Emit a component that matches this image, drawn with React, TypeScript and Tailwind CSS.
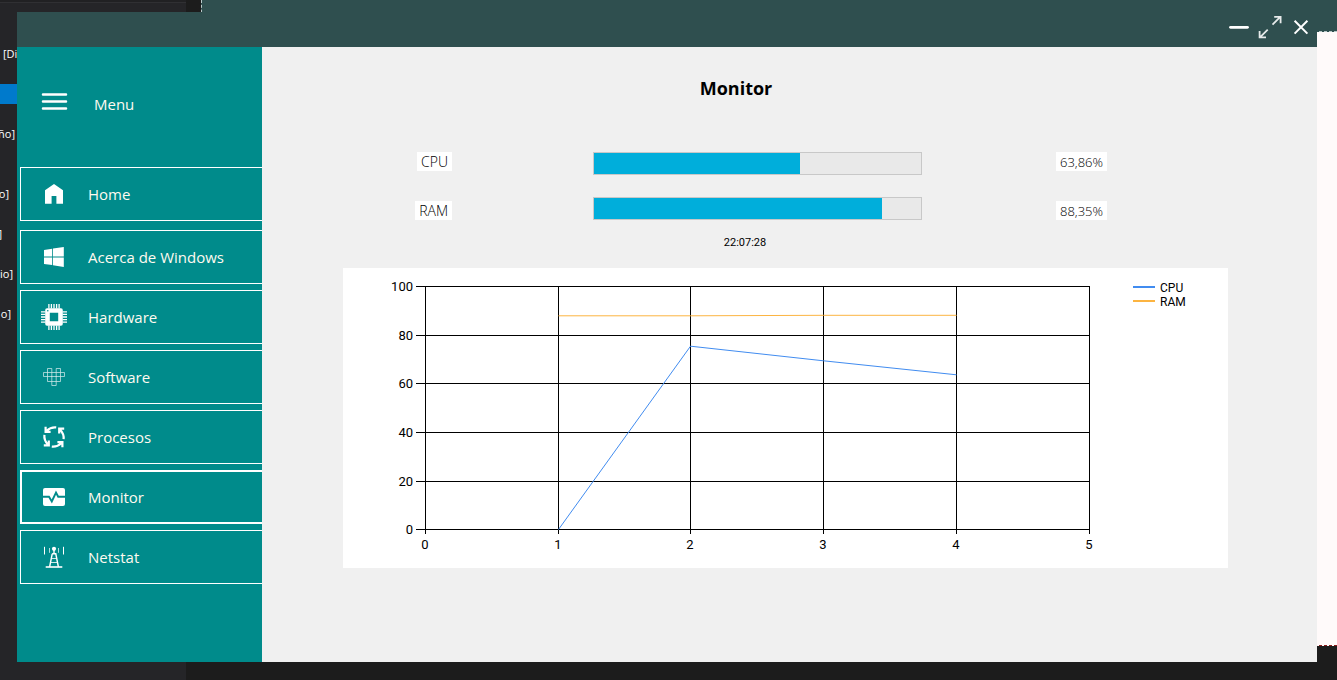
import type { ReactNode } from "react";

type IconProps = { children: ReactNode };

function MenuIcon({ children }: IconProps) {
  return (
    <svg viewBox="0 0 28 28" className="size-7 shrink-0" fill="none" stroke="none" aria-hidden="true">
      {children}
    </svg>
  );
}

const chipPins = [8.9, 11.4, 14, 16.6, 19.1];

const icons: Record<string, ReactNode> = {
  home: <path fill="#fff" d="M14 4 23 10.2V23.8H16.4V16H11.6V23.8H5V10.2Z" />,
  windows: (
    <path
      fill="#fff"
      d="M4 6.9 12.2 5.8V13.5H4ZM13 5.6 23.8 4.1V13.5H13ZM4 14.4H12.2V22.1L4 21ZM13 14.4H23.8V23.9L13 22.3Z"
    />
  ),
  chip: (
    <>
      <g stroke="#fff" strokeWidth="1.3">
        {chipPins.map((p) => (
          <path key={p} d={`M${p} 1V5.5M${p} 22.5V27M1 ${p}H5.5M22.5 ${p}H27`} />
        ))}
      </g>
      <path
        fill="#fff"
        fillRule="evenodd"
        d="M7.3 5.2H20.7A2 2 0 0 1 22.8 7.3V20.7A2 2 0 0 1 20.7 22.8H7.3A2 2 0 0 1 5.2 20.7V7.3A2 2 0 0 1 7.3 5.2ZM9.8 9.8V18.2H18.2V9.8Z"
      />
      <circle cx="7.8" cy="7.8" r="0.8" fill="#008b8b" />
    </>
  ),
  software: (
    <path
      stroke="#fff"
      strokeOpacity="0.6"
      strokeWidth="1"
      d="M7.5 5.5H11.8V9.5H16.2V5.5H20.5V9.5H24.5V13.5H20.5V18.5H16.2V22.5H11.8V18.5H7.5V13.5H3.5V9.5H7.5ZM7.5 9.5H11.8M16.2 9.5H20.5M7.5 13.5H20.5M11.8 18.5H16.2M7.5 9.5V13.5M11.8 9.5V18.5M16.2 9.5V18.5M20.5 9.5V13.5"
    />
  ),
  cycle: (
    <g stroke="#fff" strokeWidth="2.2">
      {[0, 90, 180, 270].map((a) => (
        <path key={a} transform={`rotate(${a} 14 14)`} d="M16.2 4.4C12.6 4 9.6 5 6.4 8M5.6 3.8V8.8H10.6" />
      ))}
    </g>
  ),
  monitor: (
    <>
      <rect x="3" y="5" width="22" height="18" rx="2" fill="#fff" />
      <path stroke="#008b8b" strokeWidth="1.9" d="M3 13.8H9L11.8 18.4 16 9.6 18.2 13.8H25" />
    </>
  ),
  antenna: (
    <>
      <circle cx="14" cy="5.8" r="2.1" fill="#fff" />
      <g stroke="#fff">
        <path strokeWidth="1.4" d="M14 7V11" />
        <path strokeWidth="1.4" d="M12.2 10.8H15.8L18.4 24M12.2 10.8 9.6 24" />
        <path strokeWidth="1" strokeOpacity="0.8" d="M11.6 15.5H16.4M10.8 19.5H17.2" />
        <path strokeWidth="1.6" d="M5.7 24H22.3" />
        <path strokeWidth="1" d="M4.5 3.8V11.5M23.5 3.8V11.5" />
        <path strokeWidth="1" strokeOpacity="0.7" d="M9.5 5V9.8M18.5 5V9.8" />
      </g>
    </>
  ),
};

const home = { label: "Home", icon: "home" };

const sections = [
  { label: "Acerca de Windows", icon: "windows" },
  { label: "Hardware", icon: "chip" },
  { label: "Software", icon: "software" },
  { label: "Procesos", icon: "cycle" },
  { label: "Monitor", icon: "monitor", active: true },
  { label: "Netstat", icon: "antenna" },
];

function NavButton({ label, icon, active = false }: { label: string; icon: string; active?: boolean }) {
  return (
    <button
      type="button"
      aria-current={active ? "page" : undefined}
      className={
        active
          ? "flex h-[54px] w-full items-center gap-5 border-2 border-r-0 border-white pl-[18px] text-left"
          : "flex h-[54px] w-full items-center gap-5 border border-r-0 border-white pl-[19px] text-left"
      }
    >
      <MenuIcon>{icons[icon]}</MenuIcon>
      <span>{label}</span>
    </button>
  );
}

function Sidebar() {
  return (
    <nav className="w-[245px] shrink-0 bg-[#008b8b] pl-[3px] text-[15px] leading-5 text-[#fffaf0]">
      <div className="flex h-[120px] items-center pb-1.5 pl-5">
        <button type="button" className="flex items-center gap-[26px]">
          <MenuIcon>
            <path stroke="#fff" strokeWidth="2.5" strokeLinecap="round" d="M3 4.5H26M3 11.5H26M3 18.5H26" />
          </MenuIcon>
          <span>Menu</span>
        </button>
      </div>
      <NavButton {...home} />
      <div className="mt-[9px] flex flex-col gap-1.5">
        {sections.map((s) => (
          <NavButton key={s.label} {...s} />
        ))}
      </div>
    </nav>
  );
}

function TitleBar() {
  return (
    <header className="flex h-[35px] shrink-0 items-start justify-end gap-[7px] bg-[#2f4f4f] pt-[3px] pr-1">
      <button type="button" aria-label="Minimizar" className="size-6">
        <svg viewBox="0 0 24 24" fill="none" stroke="#fff" strokeWidth="2.8" strokeLinecap="round">
          <path d="M3.5 12.3H20.5" />
        </svg>
      </button>
      <button type="button" aria-label="Maximizar" className="size-6">
        <svg viewBox="0 0 24 24" fill="none" stroke="#e6eaea" strokeWidth="1.8">
          <path d="M14.5 9.7 22 2.2M16.2 1.8H22.6V8.3M9.7 14.7 2.2 22.2M1.6 16V22.4H8" />
        </svg>
      </button>
      <button type="button" aria-label="Cerrar" className="size-6">
        <svg viewBox="0 0 24 24" fill="none" stroke="#fff" strokeWidth="2">
          <path d="M5.6 5.8 18.4 18.6M18.4 5.8 5.6 18.6" />
        </svg>
      </button>
    </header>
  );
}

function Meter({ id, name, value, text, align }: { id: string; name: string; value: number; text: string; align: string }) {
  return (
    <div className={`flex h-[23px] leading-[18px] font-light text-black ${align}`}>
      <div className="flex w-[109px] shrink-0 justify-end">
        <label htmlFor={id} className="bg-white px-1 pt-px text-[14px]">
          {name}
        </label>
      </div>
      <progress
        id={id}
        max={100}
        value={value}
        className="mr-[134px] ml-[141px] block h-[23px] min-w-0 flex-1 appearance-none border border-[#c8c8c8] bg-[#e9e9e9] [&::-webkit-progress-bar]:bg-[#e9e9e9] [&::-webkit-progress-value]:bg-[#00aedb]"
      />
      <div className="flex w-[172px] shrink-0">
        <span className="bg-white px-1 pt-px text-[13px]">{text}</span>
      </div>
    </div>
  );
}

const xTicks = [82, 215, 347, 480, 613, 746];
const yTicks = [18, 67, 115, 164, 213, 261];

function UsageChart() {
  return (
    <svg
      viewBox="0 0 885 300"
      role="img"
      aria-label="CPU / RAM"
      className="mt-[17px] block w-full bg-white font-[Roboto,sans-serif] text-[13px]"
    >
      <g fill="#000">
        {yTicks.map((y) => (
          <rect key={y} x="73" y={y} width="674" height="1" />
        ))}
        {xTicks.map((x) => (
          <rect key={x} x={x} y="18" width="1" height="248" />
        ))}
        {yTicks.map((y, i) => (
          <text key={y} x="70" y={y + 5} textAnchor="end">
            {100 - i * 20}
          </text>
        ))}
        {xTicks.map((x, i) => (
          <text key={x} x={x} y="281" textAnchor="middle">
            {i}
          </text>
        ))}
      </g>
      <g fill="none" strokeWidth="1">
        <path stroke="#418cf0" d="M215.5 261.5 347.5 78.2 480.5 92.8 613.5 106.8" />
        <path stroke="#fcb441" d="M215.5 47.8 347.5 47.8 480.5 47.3H613.5" />
      </g>
      <rect x="790" y="18" width="22" height="2" fill="#418cf0" />
      <rect x="790" y="32" width="22" height="2" fill="#fcb441" />
      <g fill="#000" className="text-[12px]">
        <text x="817" y="24">CPU</text>
        <text x="817" y="38">RAM</text>
      </g>
    </svg>
  );
}

function MonitorPage() {
  return (
    <main className="min-w-0 flex-1 bg-[#f0f0f0] pt-[27px] pr-[89px] pl-[81px] text-black">
      <h1 className="pr-[99px] text-center text-[18px] leading-7 font-bold">Monitor</h1>
      <div className="mt-[50px] flex flex-col gap-[22px]">
        <Meter id="cpu" name="CPU" value={63} text="63,86%" align="items-start" />
        <Meter id="ram" name="RAM" value={88} text="88,35%" align="items-end" />
      </div>
      <time className="mt-[15px] block pr-[81px] text-center font-[Roboto,sans-serif] text-[11px] leading-4">
        22:07:28
      </time>
      <UsageChart />
    </main>
  );
}

const editorRows = ["", "", "", "", "ño]", "", "", "o]", "", "]", "", "io]", "", "o]"];
const editorInsets = [
  "pr-0", "pr-0", "pr-0", "pr-0", "pr-0.5", "pr-0", "pr-0",
  "pr-2", "pr-0", "pr-[15px]", "pr-0", "pr-1", "pr-0", "pr-1.5",
];

function Desktop() {
  return (
    <div className="absolute inset-0 flex bg-[#1c1c1c]">
      <div className="w-[186px] shrink-0 border-t-2 border-[#212123] bg-[#252528]">
        <div className="h-[42px] border-t border-[#303033]" />
        <div className="w-[17px] overflow-hidden text-[11px] leading-5 text-white">
          {editorRows.map((row, i) =>
            i === 0 ? (
              <div key={i} className="h-5 pl-[3px] whitespace-nowrap">
                [Di
              </div>
            ) : (
              <div
                key={i}
                className={`flex h-5 justify-end whitespace-nowrap ${editorInsets[i]} ${i === 2 ? "bg-[#007acc]" : ""}`}
              >
                {row}
              </div>
            ),
          )}
        </div>
      </div>
      <div className="ml-[15px] flex min-w-0 flex-1 flex-col">
        <div className="h-8 shrink-0 border-b border-l border-dashed border-[#b9c9c9] bg-[#2f4f4f]" />
        <div className="flex-1 border-b border-dashed border-[#8b1a1a] bg-[#fffafa]" />
        <div className="h-[34px] shrink-0" />
      </div>
    </div>
  );
}

export default function App() {
  return (
    <div className="relative flex min-h-screen pt-3 pr-5 pb-[18px] pl-[17px] font-['Open_Sans','Noto_Sans',sans-serif]">
      <Desktop />
      <div className="relative flex min-w-0 flex-1 flex-col">
        <TitleBar />
        <div className="flex flex-1">
          <Sidebar />
          <MonitorPage />
        </div>
      </div>
    </div>
  );
}
